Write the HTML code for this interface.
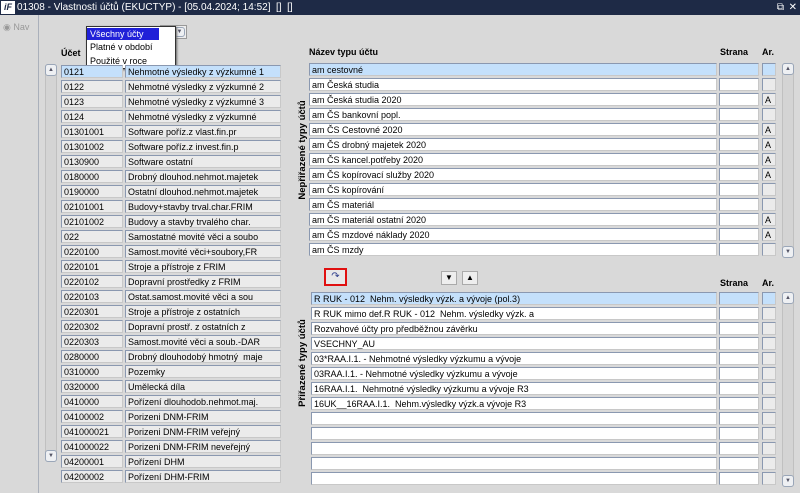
<!DOCTYPE html>
<html><head><meta charset="utf-8"><style>
*{margin:0;padding:0;box-sizing:border-box}
body{width:800px;height:493px;overflow:hidden;background:#d9d9d9;font-family:"Liberation Sans",sans-serif;font-size:9px;color:#000;position:relative}
.a{position:absolute}
.c{position:absolute;height:13px;background:#ebebeb;border:1px solid #8a98b0;border-right-color:#c8c8c8;border-bottom-color:#c8c8c8;padding-left:2px;line-height:12px;white-space:nowrap;overflow:hidden}
.w{background:#fff}
.s{background:#c4e0fb}
.h{position:absolute;font-weight:bold;font-size:9px}
.sb{position:absolute;width:12px;background:#d4d4d4;border:1px solid #c0c0c0;border-radius:3px}
.btn{position:absolute;width:12px;height:12px;border:1px solid #9aa6b8;border-radius:3px;background:#eef0f3;font-size:6px;color:#556;text-align:center;line-height:10px}
.vl{position:absolute;font-weight:bold;font-size:9.5px;height:12px;line-height:12px;transform:rotate(-90deg);transform-origin:center;white-space:nowrap;text-align:center}
</style></head><body>
<div class="a" style="left:0;top:0;width:800px;height:15px;background:#1e2a46;color:#fff;font-size:10px;line-height:15px">
<span style="display:inline-block;width:14px;height:13px;margin:1px 2px 0 1px;background:#fff;color:#1e2a46;font-weight:bold;font-style:italic;font-size:9px;line-height:13px;text-align:center;vertical-align:top">iF</span>01308 - Vlastnosti účtů (EKUCTYP) - [05.04.2024; 14:52] &nbsp;[] &nbsp;[]
<span style="position:absolute;right:16px;top:0">⧉</span><span style="position:absolute;right:3px;top:0">✕</span></div>
<div class="a" style="left:38px;top:15px;width:1px;height:478px;background:#aab0bb"></div>
<div class="a" style="left:3px;top:22px;color:#999;font-size:9px">◉ Nav</div>

<div class="h" style="left:61px;top:48px">Účet</div>
<div class="h" style="left:157px;top:48px">tu</div>
<div class="a" style="left:160px;top:25px;width:27px;height:14px;background:#eee;border:1px solid #999"></div>
<div class="btn" style="left:174px;top:27px;width:11px;height:10px;line-height:8px">▼</div>
<div class="a" style="left:86px;top:26px;width:90px;height:43px;background:#fff;border:1px solid #333;box-shadow:1px 1px 2px #666"></div>
<div class="a" style="left:87px;top:28px;width:72px;height:12px;background:#2020d8;color:#fff;padding-left:3px;line-height:12px">Všechny účty</div>
<div class="a" style="left:90px;top:42px">Platné v období</div>
<div class="a" style="left:90px;top:56px">Použité v roce</div>

<div class="sb" style="left:45px;top:64px;height:398px"></div>
<div class="btn" style="left:45px;top:64px">▲</div>
<div class="btn" style="left:45px;top:450px">▼</div>

<div class="c s" style="left:61px;top:65px;width:62px">0121</div><div class="c s" style="left:125px;top:65px;width:156px">Nehmotné výsledky z výzkumné 1</div>
<div class="c" style="left:61px;top:80px;width:62px">0122</div><div class="c" style="left:125px;top:80px;width:156px">Nehmotné výsledky z výzkumné 2</div>
<div class="c" style="left:61px;top:95px;width:62px">0123</div><div class="c" style="left:125px;top:95px;width:156px">Nehmotné výsledky z výzkumné 3</div>
<div class="c" style="left:61px;top:110px;width:62px">0124</div><div class="c" style="left:125px;top:110px;width:156px">Nehmotné výsledky z výzkumné</div>
<div class="c" style="left:61px;top:125px;width:62px">01301001</div><div class="c" style="left:125px;top:125px;width:156px">Software poříz.z vlast.fin.pr</div>
<div class="c" style="left:61px;top:140px;width:62px">01301002</div><div class="c" style="left:125px;top:140px;width:156px">Software poříz.z invest.fin.p</div>
<div class="c" style="left:61px;top:155px;width:62px">0130900</div><div class="c" style="left:125px;top:155px;width:156px">Software ostatní</div>
<div class="c" style="left:61px;top:170px;width:62px">0180000</div><div class="c" style="left:125px;top:170px;width:156px">Drobný dlouhod.nehmot.majetek</div>
<div class="c" style="left:61px;top:185px;width:62px">0190000</div><div class="c" style="left:125px;top:185px;width:156px">Ostatní dlouhod.nehmot.majetek</div>
<div class="c" style="left:61px;top:200px;width:62px">02101001</div><div class="c" style="left:125px;top:200px;width:156px">Budovy+stavby trval.char.FRIM</div>
<div class="c" style="left:61px;top:215px;width:62px">02101002</div><div class="c" style="left:125px;top:215px;width:156px">Budovy a stavby trvalého char.</div>
<div class="c" style="left:61px;top:230px;width:62px">022</div><div class="c" style="left:125px;top:230px;width:156px">Samostatné movité věci a soubo</div>
<div class="c" style="left:61px;top:245px;width:62px">0220100</div><div class="c" style="left:125px;top:245px;width:156px">Samost.movité věci+soubory,FR</div>
<div class="c" style="left:61px;top:260px;width:62px">0220101</div><div class="c" style="left:125px;top:260px;width:156px">Stroje a přístroje z FRIM</div>
<div class="c" style="left:61px;top:275px;width:62px">0220102</div><div class="c" style="left:125px;top:275px;width:156px">Dopravní prostředky z FRIM</div>
<div class="c" style="left:61px;top:290px;width:62px">0220103</div><div class="c" style="left:125px;top:290px;width:156px">Ostat.samost.movité věci a sou</div>
<div class="c" style="left:61px;top:305px;width:62px">0220301</div><div class="c" style="left:125px;top:305px;width:156px">Stroje a přístroje z ostatních</div>
<div class="c" style="left:61px;top:320px;width:62px">0220302</div><div class="c" style="left:125px;top:320px;width:156px">Dopravní prostř. z ostatních z</div>
<div class="c" style="left:61px;top:335px;width:62px">0220303</div><div class="c" style="left:125px;top:335px;width:156px">Samost.movité věci a soub.-DAR</div>
<div class="c" style="left:61px;top:350px;width:62px">0280000</div><div class="c" style="left:125px;top:350px;width:156px">Drobný dlouhodobý hmotný &nbsp;maje</div>
<div class="c" style="left:61px;top:365px;width:62px">0310000</div><div class="c" style="left:125px;top:365px;width:156px">Pozemky</div>
<div class="c" style="left:61px;top:380px;width:62px">0320000</div><div class="c" style="left:125px;top:380px;width:156px">Umělecká díla</div>
<div class="c" style="left:61px;top:395px;width:62px">0410000</div><div class="c" style="left:125px;top:395px;width:156px">Pořízení dlouhodob.nehmot.maj.</div>
<div class="c" style="left:61px;top:410px;width:62px">04100002</div><div class="c" style="left:125px;top:410px;width:156px">Porizeni DNM-FRIM</div>
<div class="c" style="left:61px;top:425px;width:62px">041000021</div><div class="c" style="left:125px;top:425px;width:156px">Porizeni DNM-FRIM veřejný</div>
<div class="c" style="left:61px;top:440px;width:62px">041000022</div><div class="c" style="left:125px;top:440px;width:156px">Porizeni DNM-FRIM neveřejný</div>
<div class="c" style="left:61px;top:455px;width:62px">04200001</div><div class="c" style="left:125px;top:455px;width:156px">Pořízení DHM</div>
<div class="c" style="left:61px;top:470px;width:62px">04200002</div><div class="c" style="left:125px;top:470px;width:156px">Pořízení DHM-FRIM</div>

<div class="vl" style="left:248px;top:144px;width:110px">Nepřiřazené typy účtů</div>
<div class="vl" style="left:253px;top:357px;width:100px">Přiřazené typy účtů</div>

<div class="h" style="left:309px;top:47px">Název typu účtu</div>
<div class="h" style="left:720px;top:47px">Strana</div>
<div class="h" style="left:762px;top:47px">Ar.</div>
<div class="sb" style="left:782px;top:63px;height:195px"></div>
<div class="btn" style="left:782px;top:63px">▲</div>
<div class="btn" style="left:782px;top:246px">▼</div>

<div class="c s" style="left:309px;top:63px;width:408px">am cestovné</div><div class="c s" style="left:719px;top:63px;width:40px"></div><div class="c s" style="left:762px;top:63px;width:14px"></div>
<div class="c w" style="left:309px;top:78px;width:408px">am Česká studia</div><div class="c w" style="left:719px;top:78px;width:40px"></div><div class="c" style="left:762px;top:78px;width:14px"></div>
<div class="c w" style="left:309px;top:93px;width:408px">am Česká studia 2020</div><div class="c w" style="left:719px;top:93px;width:40px"></div><div class="c" style="left:762px;top:93px;width:14px">A</div>
<div class="c w" style="left:309px;top:108px;width:408px">am ČS bankovní popl.</div><div class="c w" style="left:719px;top:108px;width:40px"></div><div class="c" style="left:762px;top:108px;width:14px"></div>
<div class="c w" style="left:309px;top:123px;width:408px">am ČS Cestovné 2020</div><div class="c w" style="left:719px;top:123px;width:40px"></div><div class="c" style="left:762px;top:123px;width:14px">A</div>
<div class="c w" style="left:309px;top:138px;width:408px">am ČS drobný majetek 2020</div><div class="c w" style="left:719px;top:138px;width:40px"></div><div class="c" style="left:762px;top:138px;width:14px">A</div>
<div class="c w" style="left:309px;top:153px;width:408px">am ČS kancel.potřeby 2020</div><div class="c w" style="left:719px;top:153px;width:40px"></div><div class="c" style="left:762px;top:153px;width:14px">A</div>
<div class="c w" style="left:309px;top:168px;width:408px">am ČS kopírovací služby 2020</div><div class="c w" style="left:719px;top:168px;width:40px"></div><div class="c" style="left:762px;top:168px;width:14px">A</div>
<div class="c w" style="left:309px;top:183px;width:408px">am ČS kopírování</div><div class="c w" style="left:719px;top:183px;width:40px"></div><div class="c" style="left:762px;top:183px;width:14px"></div>
<div class="c w" style="left:309px;top:198px;width:408px">am ČS materiál</div><div class="c w" style="left:719px;top:198px;width:40px"></div><div class="c" style="left:762px;top:198px;width:14px"></div>
<div class="c w" style="left:309px;top:213px;width:408px">am ČS materiál ostatní 2020</div><div class="c w" style="left:719px;top:213px;width:40px"></div><div class="c" style="left:762px;top:213px;width:14px">A</div>
<div class="c w" style="left:309px;top:228px;width:408px">am ČS mzdové náklady 2020</div><div class="c w" style="left:719px;top:228px;width:40px"></div><div class="c" style="left:762px;top:228px;width:14px">A</div>
<div class="c w" style="left:309px;top:243px;width:408px">am ČS mzdy</div><div class="c w" style="left:719px;top:243px;width:40px"></div><div class="c" style="left:762px;top:243px;width:14px"></div>

<div class="a" style="left:324px;top:268px;width:23px;height:18px;border:2px solid #e01010;background:#e8e8e8;color:#2a3a8a;font-size:10px;text-align:center;line-height:13px">↷</div>
<div class="a" style="left:441px;top:271px;width:16px;height:14px;border:1px solid #aaa;background:#eee;font-size:8px;text-align:center;line-height:12px">▼</div>
<div class="a" style="left:462px;top:271px;width:16px;height:14px;border:1px solid #aaa;background:#eee;font-size:8px;text-align:center;line-height:12px">▲</div>
<div class="h" style="left:720px;top:278px">Strana</div>
<div class="h" style="left:762px;top:278px">Ar.</div>
<div class="sb" style="left:782px;top:292px;height:195px"></div>
<div class="btn" style="left:782px;top:292px">▲</div>
<div class="btn" style="left:782px;top:475px">▼</div>

<div class="c s" style="left:311px;top:292px;width:406px">R RUK - 012 &nbsp;Nehm. výsledky výzk. a vývoje (pol.3)</div><div class="c s" style="left:719px;top:292px;width:40px"></div><div class="c s" style="left:762px;top:292px;width:14px"></div>
<div class="c w" style="left:311px;top:307px;width:406px">R RUK mimo def.R RUK - 012 &nbsp;Nehm. výsledky výzk. a</div><div class="c w" style="left:719px;top:307px;width:40px"></div><div class="c" style="left:762px;top:307px;width:14px"></div>
<div class="c w" style="left:311px;top:322px;width:406px">Rozvahové účty pro předběžnou závěrku</div><div class="c w" style="left:719px;top:322px;width:40px"></div><div class="c" style="left:762px;top:322px;width:14px"></div>
<div class="c w" style="left:311px;top:337px;width:406px">VSECHNY_AU</div><div class="c w" style="left:719px;top:337px;width:40px"></div><div class="c" style="left:762px;top:337px;width:14px"></div>
<div class="c w" style="left:311px;top:352px;width:406px">03*RAA.I.1. - Nehmotné výsledky výzkumu a vývoje</div><div class="c w" style="left:719px;top:352px;width:40px"></div><div class="c" style="left:762px;top:352px;width:14px"></div>
<div class="c w" style="left:311px;top:367px;width:406px">03RAA.I.1. - Nehmotné výsledky výzkumu a vývoje</div><div class="c w" style="left:719px;top:367px;width:40px"></div><div class="c" style="left:762px;top:367px;width:14px"></div>
<div class="c w" style="left:311px;top:382px;width:406px">16RAA.I.1. &nbsp;Nehmotné výsledky výzkumu a vývoje R3</div><div class="c w" style="left:719px;top:382px;width:40px"></div><div class="c" style="left:762px;top:382px;width:14px"></div>
<div class="c w" style="left:311px;top:397px;width:406px">16UK__16RAA.I.1. &nbsp;Nehm.výsledky výzk.a vývoje R3</div><div class="c w" style="left:719px;top:397px;width:40px"></div><div class="c" style="left:762px;top:397px;width:14px"></div>
<div class="c w" style="left:311px;top:412px;width:406px"></div><div class="c w" style="left:719px;top:412px;width:40px"></div><div class="c" style="left:762px;top:412px;width:14px"></div>
<div class="c w" style="left:311px;top:427px;width:406px"></div><div class="c w" style="left:719px;top:427px;width:40px"></div><div class="c" style="left:762px;top:427px;width:14px"></div>
<div class="c w" style="left:311px;top:442px;width:406px"></div><div class="c w" style="left:719px;top:442px;width:40px"></div><div class="c" style="left:762px;top:442px;width:14px"></div>
<div class="c w" style="left:311px;top:457px;width:406px"></div><div class="c w" style="left:719px;top:457px;width:40px"></div><div class="c" style="left:762px;top:457px;width:14px"></div>
<div class="c w" style="left:311px;top:472px;width:406px"></div><div class="c w" style="left:719px;top:472px;width:40px"></div><div class="c" style="left:762px;top:472px;width:14px"></div>
</body></html>
